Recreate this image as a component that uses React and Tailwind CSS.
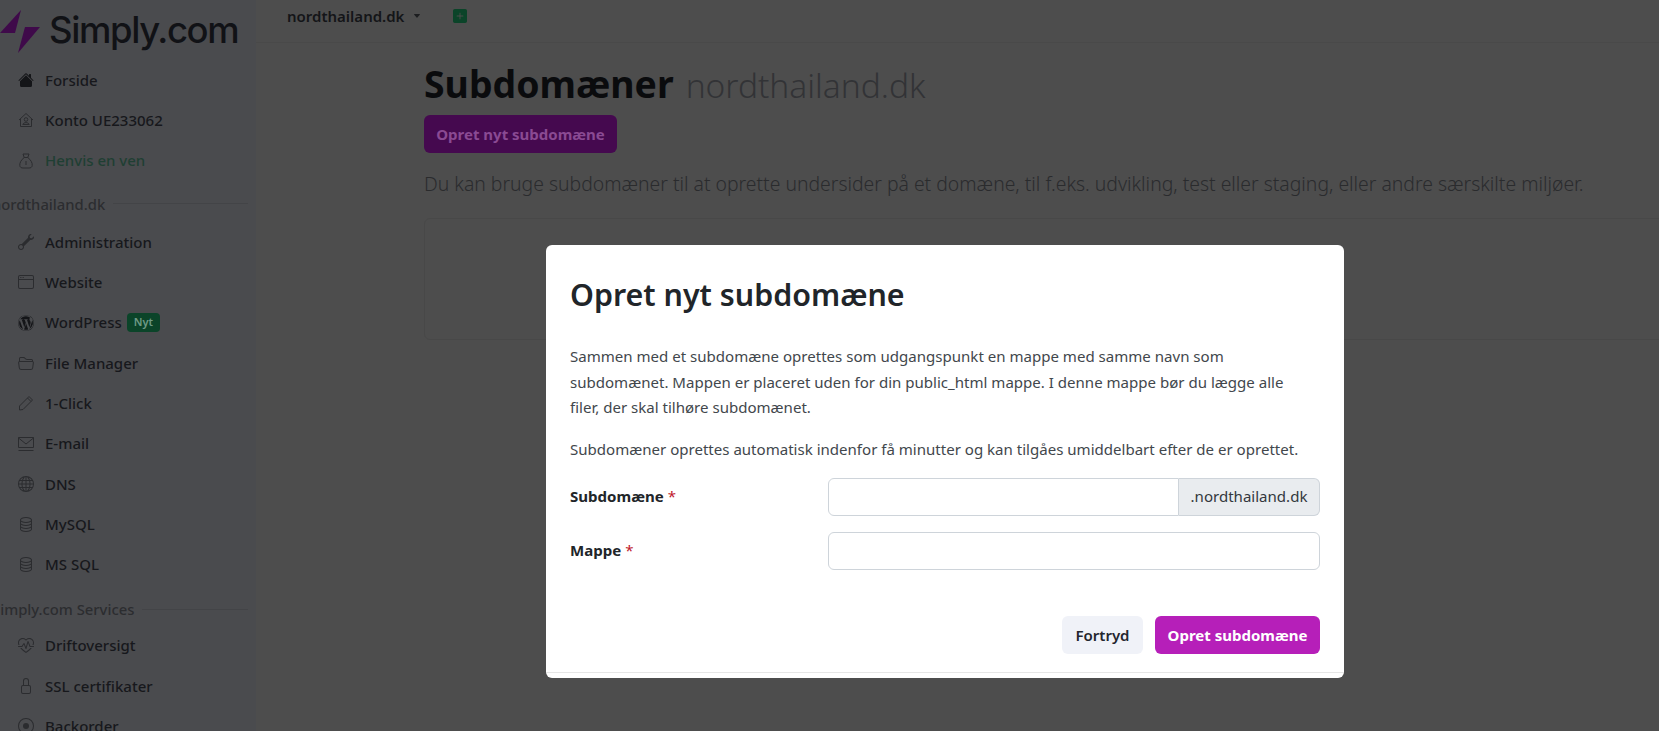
import React from "react";
import { BsHouseFill, BsWrench, BsWindow, BsWordpress, BsFolder2Open, BsGlobe, BsDatabase, BsHeartPulse, BsLock, BsRecordCircle, BsPlusSquareFill, BsCaretDownFill } from "react-icons/bs";

const Svg = ({ children }) => (
  <svg viewBox="0 0 16 16" width="16" height="16" fill="none" stroke="currentColor" strokeWidth="1">{children}</svg>
);
const HousePerson = () => (
  <Svg>
    <path d="M1 8 L8 1.5 L15 8 M2.5 7 V14.5 H13.5 V7" />
    <circle cx="8" cy="7.5" r="1.8" />
    <path d="M4.8 12.5 C5.5 10 10.5 10 11.2 12.5 Z" />
  </Svg>
);
const MoneyBag = () => (
  <Svg>
    <path d="M5 1 H11 L9.8 4.5 H6.2 Z M6.2 4.5 C3 7 1.5 10 1.8 12.5 C2 14.5 3.5 15 5 15 H11 C12.5 15 14 14.5 14.2 12.5 C14.5 10 13 7 9.8 4.5" />
    <path d="M8 8 V12" />
  </Svg>
);
const Stick = () => (
  <Svg>
    <path d="M11 1.5 L14.5 5 L5 14.5 L1.5 15 L1.5 11 Z" />
    <path d="M9.5 3 L13 6.5" />
  </Svg>
);
const MailLine = () => (
  <Svg>
    <path d="M0.5 1.5 H15.5 V11.5 H0.5 Z M0.5 2 L8 8 L15.5 2" />
    <path d="M0.5 14.5 H15.5" />
  </Svg>
);
const FlippedWrench = () => (
  <span className="flex -scale-x-100"><BsWrench /></span>
);

function Row({ icon: Icon, label, green, children, dim }) {
  return (
    <div className="h-[40.3px] flex items-center pl-[18px]">
      <span className={`w-[27px] shrink-0 flex text-[16px] ${dim ? "text-[#2b2c2f]" : "text-[#141518]"}`}>
        <Icon />
      </span>
      <span className={`text-[15px] font-[550] whitespace-nowrap ${green ? "text-[#1f3f33]" : "text-[#17181c]"}`}>{label}</span>
      {children}
    </div>
  );
}

function Section({ label, className }) {
  return (
    <div className={`h-[41px] flex items-center gap-[8px] mr-[8px] -ml-[8px] ${className}`}>
      <span className="text-[14.8px] font-[550] text-[#2c2d30] whitespace-nowrap">{label}</span>
      <span className="flex-1 h-px bg-[#434447]" />
    </div>
  );
}

export default function App() {
  return (
    <div className="relative h-[731px] w-[1659px] overflow-hidden flex bg-[#4d4d4d] font-['Noto_Sans','Lato',sans-serif]">
      <aside className="w-[256px] shrink-0 bg-[#4a4b4e] overflow-hidden">
        <div className="h-[60px] flex items-start pt-[10px]">
          <svg viewBox="0 0 40 44" className="w-[40px] h-[44px] shrink-0">
            <path d="M21 0 L0 23 L15 23 Z" fill="#3f0a4a" />
            <path d="M40 17 L25 17 L18 43 Z" fill="#3f0a4a" />
          </svg>
          <span className="ml-[9px] text-[36.5px] leading-[40px] tracking-[-1.4px] font-medium font-['Inter',sans-serif] text-[#111216] whitespace-nowrap">Simply.com</span>
        </div>
        <Row icon={BsHouseFill} label="Forside" />
        <Row icon={HousePerson} label="Konto UE233062" dim />
        <Row icon={MoneyBag} label="Henvis en ven" green dim />
        <Section label="nordthailand.dk" className="pt-[5px]" />
        <Row icon={FlippedWrench} label="Administration" dim />
        <Row icon={BsWindow} label="Website" dim />
        <Row icon={BsWordpress} label="WordPress">
          <span className="ml-[5px] h-[19px] px-[7px] flex items-center rounded-[4px] bg-[#0b4429] text-[11px] font-semibold text-[#6f9a86]">Nyt</span>
        </Row>
        <Row icon={BsFolder2Open} label="File Manager" dim />
        <Row icon={Stick} label="1-Click" dim />
        <Row icon={MailLine} label="E-mail" dim />
        <Row icon={BsGlobe} label="DNS" dim />
        <Row icon={BsDatabase} label="MySQL" dim />
        <Row icon={BsDatabase} label="MS SQL" dim />
        <Section label="Simply.com Services" className="pt-[9px]" />
        <Row icon={BsHeartPulse} label="Driftoversigt" dim />
        <Row icon={BsLock} label="SSL certifikater" dim />
        <Row icon={BsRecordCircle} label="Backorder" dim />
      </aside>

      <main className="flex-1 min-w-0">
        <header className="h-[43px] flex items-start pt-[6px] pl-[31px] border-b border-[#494949]">
          <span className="h-[20px] flex items-center text-[15px] font-semibold text-[#141518]">nordthailand.dk</span>
          <BsCaretDownFill className="ml-[9px] mt-[6px] text-[8px] text-[#1d1e20]" />
          <BsPlusSquareFill className="ml-[32px] mt-[3px] text-[14px] text-[#0b4429]" />
        </header>
        <div className="pl-[168px]">
          <h1 className="mt-[17px] h-[48px] flex items-center gap-[12px] whitespace-nowrap">
            <span className="text-[37.4px] font-bold text-[#0a0b0d] leading-none">Subdomæner</span>
            <span className="text-[33.5px] font-light text-[#323336] leading-none pt-[4px]">nordthailand.dk</span>
          </h1>
          <button className="mt-[7px] h-[38px] w-[193px] rounded-[6px] bg-[#45094f] text-[15px] font-bold text-[#8a4a93]">Opret nyt subdomæne</button>
          <p className="mt-[17px] h-[27px] text-[19.36px] leading-[27px] font-light text-[#2a2b2d] whitespace-nowrap">
            Du kan bruge subdomæner til at oprette undersider på et domæne, til f.eks. udvikling, test eller staging, eller andre særskilte miljøer.
          </p>
          <div className="mt-[21px] h-[122px] w-[1400px] border border-[#484848] rounded-[6px]" />
        </div>
      </main>

      <div className="absolute left-[546px] top-[245px] w-[798px] h-[433px] bg-white rounded-[6px] flex flex-col">
        <div className="px-[24px] pt-[28px] h-[99px]">
          <h2 className="text-[30.4px] leading-[44px] font-semibold text-[#212529]">Opret nyt subdomæne</h2>
        </div>
        <div className="px-[24px] text-[15.06px] leading-[25.5px] text-[#42474c]">
          <p>Sammen med et subdomæne oprettes som udgangspunkt en mappe med samme navn som<br />subdomænet. Mappen er placeret uden for din public_html mappe. I denne mappe bør du lægge alle<br />filer, der skal tilhøre subdomænet.</p>
          <p className="mt-[16px]">Subdomæner oprettes automatisk indenfor få minutter og kan tilgåes umiddelbart efter de er oprettet.</p>
          <div className="mt-[16px] flex items-center h-[38px]">
            <label className="w-[258px] font-bold text-[#212529]">Subdomæne <span className="text-[#c0182c] font-normal">*</span></label>
            <div className="flex-1 flex h-[38px]">
              <input className="flex-1 min-w-0 border border-[#ced4da] rounded-l-[6px] bg-white" />
              <span className="w-[141px] flex items-center justify-center bg-[#e9ecef] border border-l-0 border-[#ced4da] rounded-r-[6px] text-[#33383d]">.nordthailand.dk</span>
            </div>
          </div>
          <div className="mt-[16px] flex items-center h-[38px]">
            <label className="w-[258px] font-bold text-[#212529]">Mappe <span className="text-[#c0182c] font-normal">*</span></label>
            <input className="flex-1 h-[38px] border border-[#ced4da] rounded-[6px] bg-white" />
          </div>
        </div>
        <div className="mt-[46px] px-[24px] flex justify-end gap-[12px]">
          <button className="h-[38px] w-[81px] rounded-[6px] bg-[#f0f2f8] text-[15px] font-semibold text-[#24262e]">Fortryd</button>
          <button className="h-[38px] w-[165px] rounded-[6px] bg-[#b61fb9] text-[15px] font-bold text-white">Opret subdomæne</button>
        </div>
        <div className="mt-auto mb-[5px] h-px bg-[#e6e6e6]" />
      </div>
    </div>
  );
}
